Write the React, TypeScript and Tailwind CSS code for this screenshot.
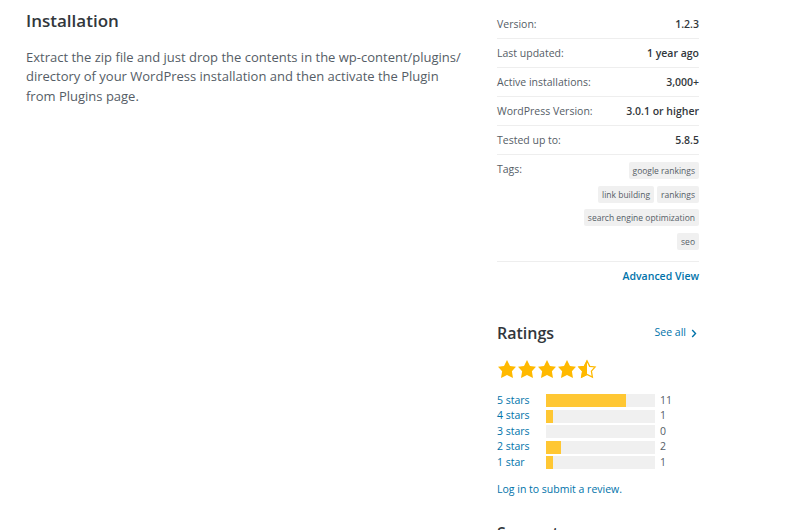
import React from 'react';

const meta = [
  { label: 'Version:', value: '1.2.3' },
  { label: 'Last updated:', value: '1 year ago' },
  { label: 'Active installations:', value: '3,000+' },
  { label: 'WordPress Version:', value: '3.0.1 or higher' },
  { label: 'Tested up to:', value: '5.8.5' },
];

const tags = ['google rankings', 'link building', 'rankings', 'search engine optimization', 'seo'];

const ratings = [
  { label: '5 stars', count: 11 },
  { label: '4 stars', count: 1 },
  { label: '3 stars', count: 0 },
  { label: '2 stars', count: 2 },
  { label: '1 star', count: 1 },
];

const total = 15;

const starPath = 'M10 1l3 6 6 .75-4.12 4.62L16 19l-6-3-6 3 1.13-6.63L1 7.75 7 7z';

function Star({ half = false }: { half?: boolean }) {
  return (
    <svg width="20" height="20" viewBox="0 0 20 20">
      {half ? (
        <>
          <defs>
            <clipPath id="halfclip">
              <rect x="0" y="0" width="10" height="20" />
            </clipPath>
          </defs>
          <path d={starPath} fill="none" stroke="#ffb900" strokeWidth="1.4" transform="translate(1 1) scale(0.9)" />
          <path d={starPath} fill="#ffb900" clipPath="url(#halfclip)" />
        </>
      ) : (
        <path d={starPath} fill="#ffb900" />
      )}
    </svg>
  );
}

export default function App() {
  return (
    <div
      className="h-[530px] w-[800px] overflow-hidden bg-white text-[#32373c]"
      style={{ fontFamily: '"Open Sans", "Noto Sans", sans-serif' }}
    >
      <div className="flex pl-[26px] pt-[9px]">
        {/* Main column */}
        <div className="w-[445px] shrink-0">
          <h2 className="text-[17px] font-semibold leading-[24px] text-[#32373c]">Installation</h2>
          <p className="mt-[14.5px] text-[13px] leading-[19.5px] text-[#555d66]">
            Extract the zip file and just drop the contents in the wp-content/plugins/ directory of your
            WordPress installation and then activate the Plugin from Plugins page.
          </p>
        </div>

        {/* Sidebar */}
        <div className="ml-[26px] w-[202px] shrink-0 pt-[1px]">
          <ul className="text-[10.5px]">
            {meta.map((m) => (
              <li
                key={m.label}
                className="flex h-[29px] items-center justify-between border-b border-[#eeeeee] pt-[1px]"
              >
                <span className="text-[#555d66]">{m.label}</span>
                <strong className="font-semibold text-[#32373c]">{m.value}</strong>
              </li>
            ))}
            <li className="flex justify-between border-b border-[#eeeeee] pb-[11px] pt-[7px]">
              <span className="text-[#555d66]">Tags:</span>
              <div className="flex w-[122px] flex-wrap justify-end gap-x-[3px] gap-y-[6.5px]">
                {tags.map((t) => (
                  <span
                    key={t}
                    className="rounded-[2px] bg-[#f0f0f0] px-[4px] text-[8.5px] leading-[17px] text-[#555d66]"
                  >
                    {t}
                  </span>
                ))}
              </div>
            </li>
          </ul>
          <div className="mt-[7px] text-right text-[10.5px] font-semibold text-[#0073aa]">Advanced View</div>

          {/* Ratings */}
          <div className="mt-[37px] flex items-center justify-between">
            <h3 className="text-[16px] font-semibold leading-[24px] text-[#32373c]">Ratings</h3>
            <a className="mr-[2px] flex items-center gap-[5px] text-[10.5px] text-[#0073aa]">
              See all
              <svg width="6" height="9" viewBox="0 0 6 9">
                <path d="M1.2 1l3.3 3.5L1.2 8" fill="none" stroke="#0073aa" strokeWidth="1.4" />
              </svg>
            </a>
          </div>
          <div className="mt-[14px] flex">
            <Star />
            <Star />
            <Star />
            <Star />
            <Star half />
          </div>
          <ul className="mt-[13.5px] text-[10.5px]">
            {ratings.map((r) => (
              <li key={r.label} className="flex h-[15.5px] items-center">
                <span className="w-[49px] text-[#0073aa]">{r.label}</span>
                <span className="h-[13px] w-[109px] bg-[#f0f0f0]">
                  <span
                    className="block h-full bg-[#ffc733]"
                    style={{ width: `${(r.count / total) * 100}%` }}
                  />
                </span>
                <span className="ml-[5px] text-[#555d66]">{r.count}</span>
              </li>
            ))}
          </ul>
          <p className="mt-[12px] text-[10.5px] text-[#0073aa]">Log in to submit a review.</p>
          <h3 className="mt-[23px] text-[16px] font-semibold leading-[24px] text-[#32373c]">Support</h3>
        </div>
      </div>
    </div>
  );
}
